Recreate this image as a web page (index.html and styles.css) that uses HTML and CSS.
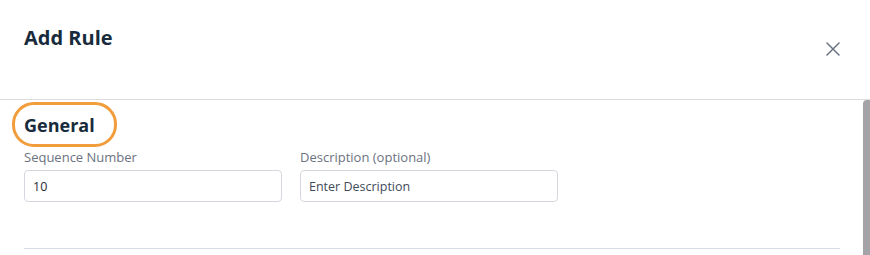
FILE: index.html
```html
<!DOCTYPE html>
<html lang="en">
<head>
    <meta charset="UTF-8">
    <meta name="viewport" content="width=device-width, initial-scale=1.0">
    <title>Add Rule</title>
    <link rel="stylesheet" href="styles.css">
</head>
<body>
    <div class="modal">
        <div class="modal-header">
            <h1>Add Rule</h1>
            <button class="close-button" aria-label="Close">
                <svg width="14" height="14" viewBox="0 0 14 14">
                    <path d="M1 1L13 13M13 1L1 13" stroke="#6b7280" stroke-width="1.5" stroke-linecap="round"/>
                </svg>
            </button>
        </div>
        <div class="modal-body">
            <div class="body-content">
                <div class="section">
                    <h2 class="section-title highlighted">General</h2>
                    <div class="form-row">
                        <div class="field">
                            <label for="sequenceInput">Sequence Number</label>
                            <input type="text" id="sequenceInput" value="10">
                        </div>
                        <div class="field">
                            <label for="descriptionInput">Description (optional)</label>
                            <input type="text" id="descriptionInput" placeholder="Enter Description">
                        </div>
                    </div>
                </div>
            </div>
            <div class="scrollbar">
                <div class="scrollbar-thumb"></div>
            </div>
        </div>
    </div>
</body>
</html>
```

FILE: styles.css
```css
body {
    font-family: "Open Sans", sans-serif;
    margin: 0;
    padding: 0;
    background-color: #fff;
    overflow: hidden;
}

.modal {
    width: 100%;
    height: 440px;
    display: flex;
    flex-direction: column;
    background-color: #fff;
}

.modal-header {
    height: 100px;
    flex-shrink: 0;
    box-sizing: border-box;
    padding: 23px 24px 0 24px;
    display: flex;
    justify-content: space-between;
    align-items: flex-start;
    border-bottom: 1px solid #dcdcdf;
}

.modal-header h1 {
    margin: 0;
    font-size: 20px;
    line-height: 30px;
    font-weight: 700;
    color: #182b3c;
}

.close-button {
    margin-top: 19px;
    margin-right: 6px;
    padding: 0;
    border: none;
    background: none;
    cursor: pointer;
    line-height: 0;
}

.modal-body {
    flex: 1;
    display: flex;
}

.body-content {
    flex: 1;
    padding: 0 23px 0 24px;
}

.scrollbar {
    width: 7px;
    background-color: #fff;
}

.scrollbar-thumb {
    height: 300px;
    background-color: #a3a3a8;
    border-radius: 4px 0 0 0;
}

.section {
    padding-bottom: 46px;
    border-bottom: 1px solid #d5dce4;
}

.section-title {
    position: relative;
    margin: 0;
    padding-top: 13px;
    font-size: 18px;
    line-height: 24px;
    font-weight: 700;
    color: #182b3c;
}

.highlighted::after {
    content: "";
    position: absolute;
    left: -12px;
    top: 2px;
    width: 99px;
    height: 39px;
    border: 3px solid #f29d3b;
    border-radius: 22px;
}

.form-row {
    display: flex;
    gap: 18px;
    margin-top: 12px;
}

.field {
    display: flex;
    flex-direction: column;
    width: 258px;
}

.field label {
    font-size: 13px;
    line-height: 16px;
    color: #6b7280;
    margin-bottom: 5px;
}

.field input {
    height: 32px;
    box-sizing: border-box;
    padding: 0 8px;
    border: 1px solid #d4d8de;
    border-radius: 4px;
    font-family: inherit;
    font-size: 12.5px;
    color: #1f2a37;
}

.field input::placeholder {
    color: #3f4a5a;
}
```
